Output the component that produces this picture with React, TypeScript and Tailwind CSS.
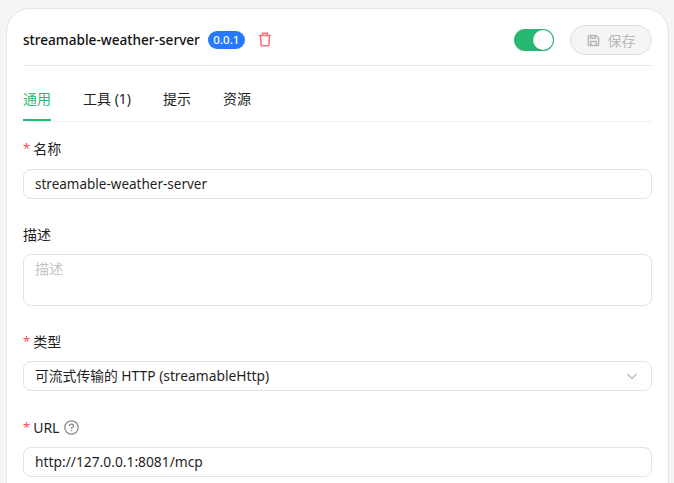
import React from "react";

const font = { fontFamily: '"Noto Sans", "Noto Sans CJK SC", sans-serif' };

function Req() {
  return <span className="mr-[3px] text-[13px] leading-none text-[#ff4d4f]">*</span>;
}

function Label({ required, children }: { required?: boolean; children: React.ReactNode }) {
  return (
    <div className="flex h-[22px] items-center text-[14px] text-[#1f1f1f]">
      {required && <Req />}
      {children}
    </div>
  );
}

export default function App() {
  return (
    <div className="h-[483px] overflow-hidden bg-[#f5f5f5] pt-2 pl-[6px] pr-[5px]" style={font}>
      <div className="h-[500px] rounded-t-[24px] border border-[#e5e5e5] bg-white px-4">
        <div className="box-border flex h-[57px] items-center justify-between border-b border-[#e6e6e6] pt-[6px]">
          <div className="flex items-center">
            <span className="text-[13.6px] font-medium text-[#111]">streamable-weather-server</span>
            <span className="ml-2 flex h-[18px] w-[37px] items-center justify-center rounded-full bg-[#2678ff] text-[11.5px] font-medium text-white">0.0.1</span>
            <svg className="ml-[13px]" width="14" height="15" viewBox="0 0 14 15" fill="none" stroke="#ff6b78" strokeWidth="1.5">
              <path d="M1 3.500h12M4.500 3.500V1.200h5v2.300M2.500 3.500l.6 9.400c0 .5.4.9.9.9h6c.5 0 .9-.4.9-.9l.6-9.400" />
            </svg>
          </div>
          <div className="flex items-center gap-4">
            <div className="flex h-[22px] w-10 items-center justify-end rounded-full bg-[#27b973] pr-[1px]">
              <div className="h-5 w-5 rounded-full bg-white shadow-sm" />
            </div>
            <div className="flex h-[30px] w-[82px] items-center justify-center gap-2 rounded-full border border-[#dedede] bg-[#f5f5f5] text-[14px] text-[#b8b8b8]">
              <svg width="13" height="13" viewBox="0 0 14 14" fill="none" stroke="#b8b8b8" strokeWidth="1.6">
                <path d="M1.500 2.500c0-.6.4-1 1-1h7.200l2.800 2.800v7.200c0 .6-.4 1-1 1h-9c-.6 0-1-.4-1-1z" />
                <path d="M4 1.500v3h5v-3M4 12.500V8h6v4.500" />
              </svg>
              保存
            </div>
          </div>
        </div>

        <div className="box-border flex h-[56px] items-stretch gap-8 border-b border-[#efefef] pt-3 text-[14px] text-[#1f1f1f]">
          <div className="flex items-center border-b-2 border-[#27b973] text-[#27b973]">通用</div>
          <div className="flex items-center pb-[2px]">工具 (1)</div>
          <div className="flex items-center pb-[2px]">提示</div>
          <div className="flex items-center pb-[2px]">资源</div>
        </div>

        <div className="pt-[15px]">
          <Label required>名称</Label>
          <div className="mt-[10px] flex h-[30px] items-center rounded-lg border border-[#e3e3e3] bg-white px-[11px] text-[13.5px] text-[#1f1f1f]">
            streamable-weather-server
          </div>

          <div className="mt-[24px]">
            <Label>描述</Label>
          </div>
          <div className="mt-[9px] h-[52px] rounded-lg border border-[#e3e3e3] bg-white px-[11px] pt-[3px] text-[14px] text-[#c4c4c4]">描述</div>

          <div className="mt-[24px]">
            <Label required>类型</Label>
          </div>
          <div className="mt-[9px] flex h-[30px] items-center justify-between rounded-lg border border-[#e3e3e3] bg-white pl-[11px] pr-[13px] text-[13.8px] text-[#1f1f1f]">
            可流式传输的 HTTP (streamableHttp)
            <svg width="12" height="12" viewBox="0 0 12 12" fill="none" stroke="#bfbfbf" strokeWidth="1.3">
              <path d="M1.500 4l4.500 4.500L10.500 4" />
            </svg>
          </div>

          <div className="mt-[25px]">
            <Label required>
              URL
              <svg className="ml-[5px]" width="15" height="15" viewBox="0 0 15 15" fill="none" stroke="#8c8c8c" strokeWidth="1.3">
                <circle cx="7.500" cy="7.500" r="6.700" />
                <path d="M5.500 6c0-1.100.9-1.800 2-1.800s2 .7 2 1.700c0 1.400-2 1.500-2 3" />
                <path d="M7.500 10.200v1.100" />
              </svg>
            </Label>
          </div>
          <div className="mt-[9px] flex h-[30px] items-center rounded-lg border border-[#e3e3e3] bg-white px-[11px] text-[13.8px] text-[#1f1f1f]">
            http://127.0.0.1:8081/mcp
          </div>
        </div>
      </div>
    </div>
  );
}
